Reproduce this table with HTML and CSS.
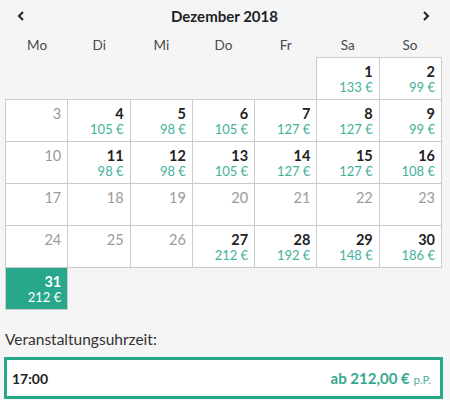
FILE: index.html
```html
<!DOCTYPE html>
<html lang="de">
<head>
<meta charset="utf-8">
<link rel="stylesheet" href="styles.css">
</head>
<body>
<div class="widget">
  <div class="cal-head">
    <span class="nav"><svg width="8" height="10" viewBox="0 0 8 10"><path d="M6 1 L2 5 L6 9" fill="none" stroke="#222" stroke-width="2"/></svg></span>
    <span class="month">Dezember 2018</span>
    <span class="nav"><svg width="8" height="10" viewBox="0 0 8 10"><path d="M2 1 L6 5 L2 9" fill="none" stroke="#222" stroke-width="2"/></svg></span>
  </div>
  <div class="weekdays">
    <span>Mo</span><span>Di</span><span>Mi</span><span>Do</span><span>Fr</span><span>Sa</span><span>So</span>
  </div>
  <div class="days">
    <div class="empty"></div><div class="empty"></div><div class="empty"></div><div class="empty"></div><div class="empty"></div>
    <div class="day av"><b>1</b><i>133 €</i></div>
    <div class="day av"><b>2</b><i>99 €</i></div>
    <div class="day off"><b>3</b></div>
    <div class="day av"><b>4</b><i>105 €</i></div>
    <div class="day av"><b>5</b><i>98 €</i></div>
    <div class="day av"><b>6</b><i>105 €</i></div>
    <div class="day av"><b>7</b><i>127 €</i></div>
    <div class="day av"><b>8</b><i>127 €</i></div>
    <div class="day av"><b>9</b><i>99 €</i></div>
    <div class="day off"><b>10</b></div>
    <div class="day av"><b>11</b><i>98 €</i></div>
    <div class="day av"><b>12</b><i>98 €</i></div>
    <div class="day av"><b>13</b><i>105 €</i></div>
    <div class="day av"><b>14</b><i>127 €</i></div>
    <div class="day av"><b>15</b><i>127 €</i></div>
    <div class="day av"><b>16</b><i>108 €</i></div>
    <div class="day off"><b>17</b></div>
    <div class="day off"><b>18</b></div>
    <div class="day off"><b>19</b></div>
    <div class="day off"><b>20</b></div>
    <div class="day off"><b>21</b></div>
    <div class="day off"><b>22</b></div>
    <div class="day off"><b>23</b></div>
    <div class="day off"><b>24</b></div>
    <div class="day off"><b>25</b></div>
    <div class="day off"><b>26</b></div>
    <div class="day av"><b>27</b><i>212 €</i></div>
    <div class="day av"><b>28</b><i>192 €</i></div>
    <div class="day av"><b>29</b><i>148 €</i></div>
    <div class="day av"><b>30</b><i>186 €</i></div>
    <div class="day av sel"><b>31</b><i>212 €</i></div>
  </div>
  <div class="label">Veranstaltungsuhrzeit:</div>
  <div class="slot">
    <span class="time">17:00</span>
    <span class="price">ab 212,00 € <small>p.P.</small></span>
  </div>
</div>
</body>
</html>
```
FILE: styles.css
```css
html, body {
  margin: 0;
  padding: 0;
  background: #f5f5f5;
}
body {
  font-family: "Lato", "Open Sans", sans-serif;
  color: #333;
}
.widget {
  width: 437px;
  padding: 0 0 0 5px;
}
.cal-head {
  height: 32px;
  display: flex;
  align-items: center;
  justify-content: space-between;
  padding: 0 10px 0 12px;
}
.nav {
  display: flex;
  width: 10px;
}
.month {
  font-weight: 700;
  font-size: 15px;
  color: #222;
}
.weekdays {
  display: grid;
  grid-template-columns: repeat(7, 1fr);
  height: 26px;
  align-items: center;
  font-size: 13.5px;
  color: #4a4a4a;
  text-align: center;
  padding-left: 1px;
  width: 435px;
}
.days {
  display: grid;
  grid-template-columns: repeat(7, 1fr);
  grid-auto-rows: 41px;
  gap: 1px;
  width: 435px;
  margin: 0 0 0 1px;
}
.day {
  background: #fff;
  box-shadow: 0 0 0 1px #cbcbcb;
  display: flex;
  flex-direction: column;
  align-items: flex-end;
  padding: 6px 6px 0 0;
}
.day b {
  font-size: 14.5px;
  line-height: 16px;
  font-weight: 700;
  color: #222;
}
.day i {
  font-style: normal;
  font-size: 13px;
  line-height: 15px;
  color: #3fb29a;
}
.day.off b {
  font-weight: 400;
  color: #9a9a9a;
}
.day.sel {
  background: #27a88c;
}
.day.sel b, .day.sel i {
  color: #fff;
}
.label {
  margin-top: 20px;
  font-size: 15.5px;
  color: #333;
  line-height: 20px;
}
.slot {
  margin-top: 8px;
  margin-left: -1px;
  height: 36px;
  border: 3px solid #27a88c;
  background: #fff;
  display: flex;
  align-items: center;
  justify-content: space-between;
  padding: 0 9px 0 5px;
  width: 419px;
}
.time {
  font-weight: 700;
  font-size: 14px;
  color: #222;
}
.price {
  font-weight: 700;
  font-size: 15px;
  color: #35a98f;
}
.price small {
  font-weight: 400;
  font-size: 11.5px;
  color: #4bb39c;
}
```
